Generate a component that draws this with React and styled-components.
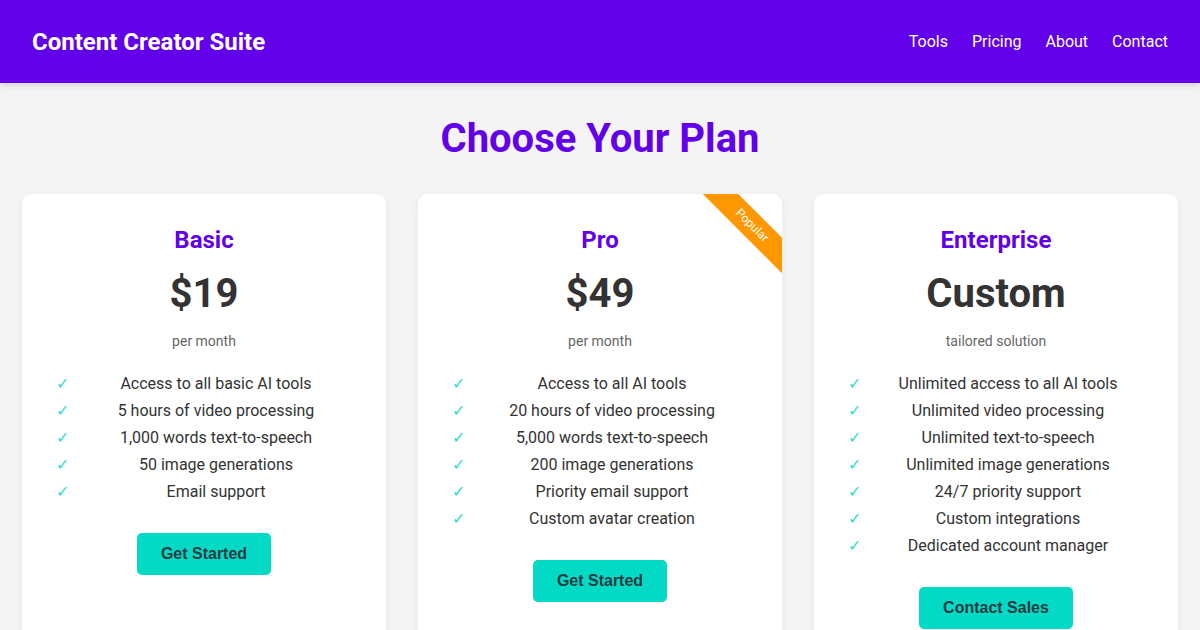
import React from "react";
import styled, { createGlobalStyle } from "styled-components";

const GlobalStyle = createGlobalStyle`
  * { box-sizing: border-box; }
  body {
    margin: 0;
    background: #f4f4f4;
    font-family: Roboto, "Liberation Sans", Arial, sans-serif;
    color: #333;
  }
`;

const plans = [
  {
    name: "Basic",
    price: "$19",
    period: "per month",
    cta: "Get Started",
    features: [
      "Access to all basic AI tools",
      "5 hours of video processing",
      "1,000 words text-to-speech",
      "50 image generations",
      "Email support",
    ],
  },
  {
    name: "Pro",
    price: "$49",
    period: "per month",
    cta: "Get Started",
    popular: true,
    features: [
      "Access to all AI tools",
      "20 hours of video processing",
      "5,000 words text-to-speech",
      "200 image generations",
      "Priority email support",
      "Custom avatar creation",
    ],
  },
  {
    name: "Enterprise",
    price: "Custom",
    period: "tailored solution",
    cta: "Contact Sales",
    features: [
      "Unlimited access to all AI tools",
      "Unlimited video processing",
      "Unlimited text-to-speech",
      "Unlimited image generations",
      "24/7 priority support",
      "Custom integrations",
      "Dedicated account manager",
    ],
  },
];

const Header = styled.header`
  background: #6200ea;
  color: #fff;
  height: 83px;
  padding: 0 32px;
  display: flex;
  align-items: center;
  justify-content: space-between;
  box-shadow: 0 2px 6px rgba(0, 0, 0, 0.15);
`;

const Logo = styled.h1`
  margin: 0;
  font-size: 24px;
  font-weight: 700;
`;

const Nav = styled.nav`
  display: flex;
  gap: 24px;
`;

const NavLink = styled.a`
  color: #fff;
  text-decoration: none;
  font-size: 16px;
`;

const Main = styled.main`
  padding: 0 22px;
`;

const Title = styled.h2`
  margin: 0;
  padding: 32px 0 31px;
  text-align: center;
  font-size: 40px;
  line-height: 48px;
  font-weight: 700;
  color: #6200ea;
`;

const Grid = styled.div`
  display: grid;
  grid-template-columns: repeat(3, 1fr);
  gap: 32px;
`;

const Card = styled.div`
  position: relative;
  overflow: hidden;
  background: #fff;
  border-radius: 10px;
  box-shadow: 0 2px 8px rgba(0, 0, 0, 0.06);
  padding: 32px 32px 40px;
  text-align: center;
`;

const Ribbon = styled.div`
  position: absolute;
  top: 19px;
  right: -30px;
  width: 120px;
  padding: 4px 0;
  background: #ff9800;
  color: #fff;
  font-size: 12px;
  line-height: 17px;
  text-align: center;
  transform: rotate(45deg);
`;

const PlanName = styled.h3`
  margin: 0 0 10px;
  font-size: 24px;
  line-height: 29px;
  font-weight: 700;
  color: #6200ea;
`;

const Price = styled.div`
  font-size: 40px;
  line-height: 58px;
  font-weight: 700;
  color: #333;
`;

const Period = styled.div`
  margin-top: 10px;
  font-size: 14px;
  line-height: 17px;
  color: #666;
`;

const Features = styled.ul`
  list-style: none;
  margin: 20px 0 28px;
  padding: 0;
`;

const Feature = styled.li`
  display: flex;
  align-items: center;
  font-size: 16px;
  line-height: 19px;
  padding: 4px 0;
`;

const Check = styled.span`
  width: 24px;
  flex-shrink: 0;
  padding-left: 2px;
  text-align: left;
  color: #2fdccb;
  font-size: 16px;
  font-family: "Noto Sans", sans-serif;
`;

const FeatureText = styled.span`
  flex: 1;
  text-align: center;
`;

const Button = styled.button`
  border: none;
  border-radius: 5px;
  background: #03dac6;
  color: #2b3a42;
  font-family: "Liberation Sans", Arial, sans-serif;
  font-weight: 700;
  font-size: 16px;
  line-height: 18px;
  padding: 12px 24px;
  cursor: pointer;
`;

export default function App() {
  return (
    <>
      <GlobalStyle />
      <Header>
        <Logo>Content Creator Suite</Logo>
        <Nav>
          <NavLink href="#">Tools</NavLink>
          <NavLink href="#">Pricing</NavLink>
          <NavLink href="#">About</NavLink>
          <NavLink href="#">Contact</NavLink>
        </Nav>
      </Header>
      <Main>
        <Title>Choose Your Plan</Title>
        <Grid>
          {plans.map((plan) => (
            <Card key={plan.name}>
              {plan.popular && <Ribbon>Popular</Ribbon>}
              <PlanName>{plan.name}</PlanName>
              <Price>{plan.price}</Price>
              <Period>{plan.period}</Period>
              <Features>
                {plan.features.map((f) => (
                  <Feature key={f}>
                    <Check>✓</Check>
                    <FeatureText>{f}</FeatureText>
                  </Feature>
                ))}
              </Features>
              <Button>{plan.cta}</Button>
            </Card>
          ))}
        </Grid>
      </Main>
    </>
  );
}
